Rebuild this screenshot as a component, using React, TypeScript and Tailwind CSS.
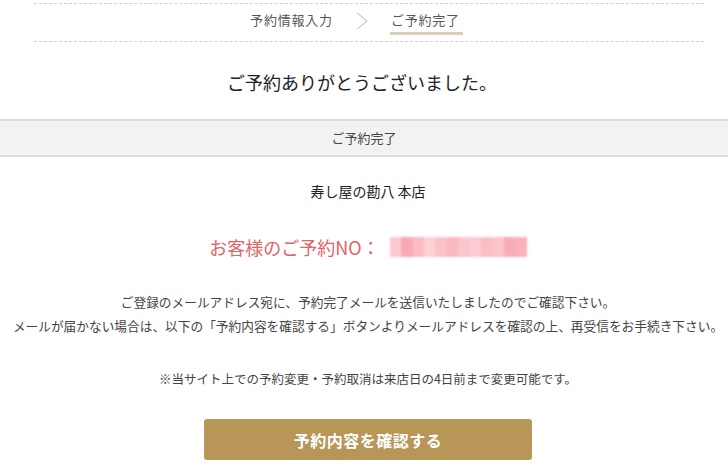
import React from 'react';

const pinks = ['#fbc9cf', '#f7aab4', '#fbbcc4', '#fcd2d7', '#fac2c9', '#f9b8c0', '#fbc5cc', '#fcccd2', '#f9bdc5', '#fbc3ca', '#f8acb6', '#f9b2bb'];

export default function App() {
  return (
    <div className="w-[728px] h-[465px] overflow-hidden bg-white text-[#333] font-['Noto_Sans_CJK_JP','Noto_Sans',sans-serif]">
      {/* Steps */}
      <div className="pl-[34px] pr-[24px] pt-[3px]">
        <div className="border-y border-dashed border-[#cfcfcf] h-[39px] flex items-start pt-[6px] justify-center gap-[23px] pr-[28px]">
          <span className="text-[13px] leading-[20px] tracking-[0.8px] text-[#555]">予約情報入力</span>
          <svg width="12" height="18" viewBox="0 0 12 18" className="text-[#b5b5b5] mt-[2px]">
            <polyline points="1,1 11,9 1,17" fill="none" stroke="currentColor" strokeWidth="1" />
          </svg>
          <span className="relative text-[13px] leading-[20px] tracking-[0.8px] text-[#555]">
            ご予約完了
            <span className="absolute left-[-1px] right-[-3px] top-[22px] h-[3px] bg-[#d8cfb9]" />
          </span>
        </div>
      </div>

      <h1 className="mt-[27px] text-center text-[18px] leading-[26px] text-[#222] pr-[4px]">ご予約ありがとうございました。</h1>

      <div className="mt-[24px] border-y-2 border-[#dedede] bg-[#f2f2f2] h-[38px] flex items-center justify-center text-[13px] text-[#444]">
        ご予約完了
      </div>

      <div className="pl-[34px] pr-[26px] flex flex-col items-center">
        <p className="mt-[23px] text-[14px] leading-[22px] text-[#222]">寿し屋の勘八 本店</p>

        <div className="mt-[33px] flex items-center text-[18px] leading-[24px] text-[#e06464]">
          <span>お客様のご予約NO：</span>
          <div className="ml-[10px] flex w-[137px] h-[20px] blur-[1px]">
            {pinks.map((c, i) => (
              <span key={i} className="flex-1 h-full" style={{ backgroundColor: c }} />
            ))}
          </div>
        </div>

        <div className="mt-[31px] text-center text-[12.7px] leading-[24px] text-[#444] whitespace-nowrap">
          <p>ご登録のメールアドレス宛に、予約完了メールを送信いたしましたのでご確認下さい。</p>
          <p>メールが届かない場合は、以下の「予約内容を確認する」ボタンよりメールアドレスを確認の上、再受信をお手続き下さい。</p>
        </div>

        <p className="mt-[29px] text-[12.5px] leading-[24px] text-[#444]">※当サイト上での予約変更・予約取消は来店日の4日前まで変更可能です。</p>

        <button className="mt-[28px] w-[328px] h-[41px] rounded-[3px] bg-[#b79658] text-white text-[16px] font-bold tracking-[0.5px]">
          予約内容を確認する
        </button>
      </div>
    </div>
  );
}
